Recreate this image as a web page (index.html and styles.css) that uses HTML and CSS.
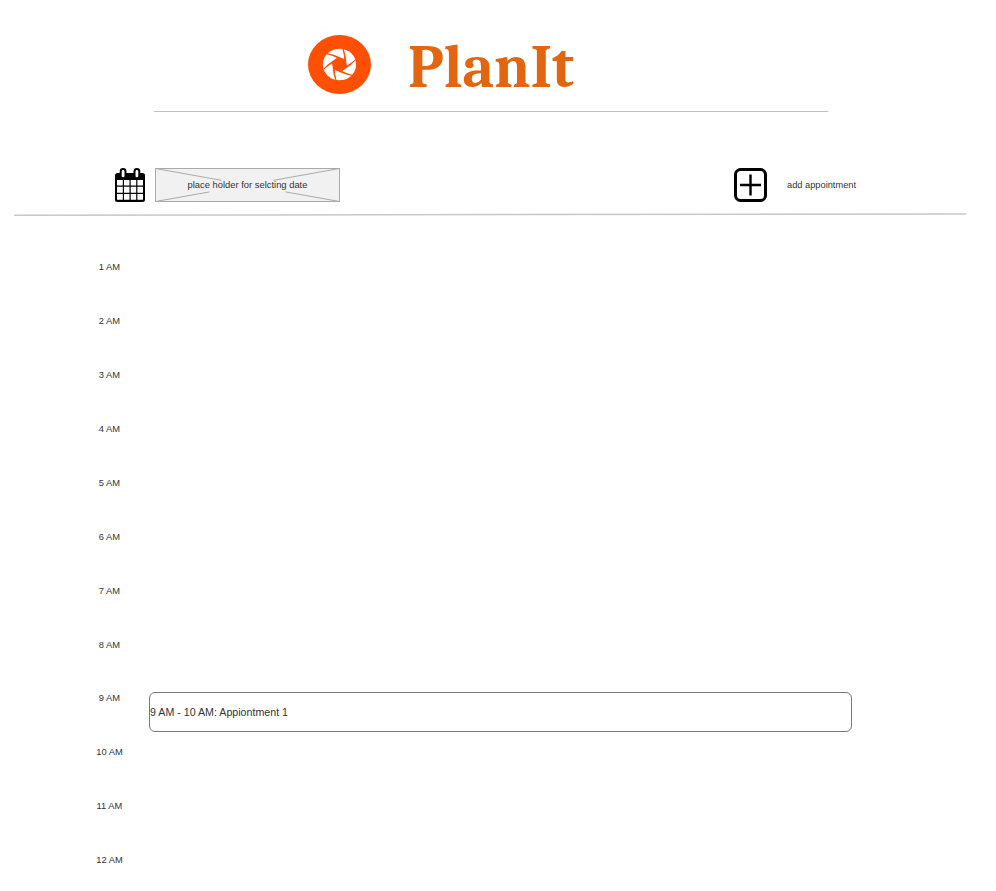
FILE: index.html
```html
<!DOCTYPE html>
<html lang="en">
<head>
<meta charset="utf-8">
<title>PlanIt</title>
<link rel="stylesheet" href="styles.css">
</head>
<body>
<header class="brand">
  <svg class="logo" width="63" height="59" viewBox="0 0 63 59">
    <ellipse cx="31.5" cy="29.5" rx="31.5" ry="29.5" fill="#ff4f04"/>
    <g transform="translate(31.5 29.5) scale(1 .95)">
      <circle r="16.6" fill="#fff"/>
      <g fill="#ff4f04" stroke="#ff4f04" stroke-width="1">
        <path id="blade" d="M3.600-16.300Q6-10 6.200-4L0 0L-.4-7.400L5.200-5Q5.200-10 3.600-16.300Z"/>
        <use href="#blade" transform="rotate(60)"/>
        <use href="#blade" transform="rotate(120)"/>
        <use href="#blade" transform="rotate(180)"/>
        <use href="#blade" transform="rotate(240)"/>
        <use href="#blade" transform="rotate(300)"/>
      </g>
    </g>
  </svg>
  <svg class="wordmark" width="168" height="60" viewBox="0 0 168 60">
    <text x="0" y="52" textLength="166" lengthAdjust="spacingAndGlyphs">PlanIt</text>
  </svg>
</header>
<section class="toolbar">
  <svg class="calendar" width="30" height="34" viewBox="0 0 30 34">
    <rect y="5" width="30" height="29" rx="2.5"/>
    <g fill="#fff">
      <path d="M2 12h5.800v5.500H2zM9 12h5.500v5.500H9zM15.700 12h5.500v5.500h-5.500zM22.400 12H28v5.500h-5.600zM2 18.700h5.800v6H2zM9 18.700h5.500v6H9zM15.700 18.700h5.500v6h-5.500zM22.400 18.700H28v6h-5.600zM2 26h5.800v5.700H2zM9 26h5.500v5.700H9zM15.700 26h5.500v5.700h-5.500zM22.400 26H28v5.700h-5.600z"/>
    </g>
    <rect x="5.700" y="1" width="4.800" height="9.300" rx="2.400" fill="#fff" stroke="#000" stroke-width="2"/>
    <rect x="19.500" y="1" width="4.800" height="9.300" rx="2.400" fill="#fff" stroke="#000" stroke-width="2"/>
  </svg>
  <div class="date">
    <svg class="cross" width="185" height="34" viewBox="0 0 185 34">
      <path d="M.5.5l66 11.800M.5 33.500l54-9.600M184.500.5l-66 11.800M184.500 33.500l-54-9.600"/>
    </svg>
    <span class="date-label">place holder for selcting date</span>
  </div>
  <svg class="plus" width="33" height="34" viewBox="0 0 33 34">
    <rect x="1.500" y="1.500" width="30" height="31" rx="5" fill="none" stroke="#000" stroke-width="3"/>
    <path d="M6 17h21M16.500 6.500v21" stroke="#000" stroke-width="2.400"/>
  </svg>
  <span class="add">add appointment</span>
</section>
<svg class="rule" width="952" height="4" viewBox="0 0 952 4"><path d="M0 2.300L952 .9"/></svg>
<main class="day">
  <div class="hour"><span class="time">1 AM</span></div>
  <div class="hour"><span class="time">2 AM</span></div>
  <div class="hour"><span class="time">3 AM</span></div>
  <div class="hour"><span class="time">4 AM</span></div>
  <div class="hour"><span class="time">5 AM</span></div>
  <div class="hour"><span class="time">6 AM</span></div>
  <div class="hour"><span class="time">7 AM</span></div>
  <div class="hour short"><span class="time">8 AM</span></div>
  <div class="hour"><span class="time">9 AM</span><div class="event">9 AM - 10 AM: Appiontment 1</div></div>
  <div class="hour"><span class="time">10 AM</span></div>
  <div class="hour"><span class="time">11 AM</span></div>
  <div class="hour"><span class="time">12 AM</span></div>
</main>
</body>
</html>
```
FILE: styles.css
```css
* { box-sizing: border-box; }
body {
  margin: 0;
  height: 891px;
  overflow: hidden;
  background: #fff;
  color: #333;
  font: 9.33px/12px "Liberation Sans", Arial, sans-serif;
}
svg { display: block; flex: none; }
.brand {
  display: flex;
  width: 674px;
  height: 112px;
  margin-left: 154px;
  padding: 35px 0 0 154px;
  border-bottom: 1px solid #c0c0c0;
}
.wordmark { margin-left: 37px; overflow: visible; }
.wordmark text {
  fill: #e2650f;
  font: bold 60px Cambria, Caladea, "Noto Serif", "DejaVu Serif Condensed", "DejaVu Serif", serif;
}
.toolbar {
  display: flex;
  align-items: center;
  height: 34px;
  margin: 56px 0 0 115px;
}
.date {
  display: grid;
  place-items: center;
  width: 185px;
  height: 34px;
  margin: 0 394px 0 10px;
  background: #f1f1f1;
  outline: 1px solid #aaa;
  outline-offset: -1px;
}
.cross, .date-label { grid-area: 1 / 1; }
.cross path { fill: none; stroke: #aaa; }
.date-label {
  font-size: 9.4px;
  white-space: nowrap;
}
.add { margin-left: 20px; font-size: 9.27px; }
.rule { margin: 11px 0 0 14px; }
.rule path { stroke: #c8c8c8; stroke-width: 1.5; }
.day { padding: 44px 0 0 90px; }
.hour { display: flex; height: 54px; }
.short { height: 53px; }
.time { width: 39px; text-align: center; }
.event {
  display: flex;
  align-items: center;
  width: 703px;
  height: 40px;
  margin: 0 0 0 20px;
  border: 1px solid #797979;
  border-radius: 6px;
  font-size: 10.67px;
}
```
